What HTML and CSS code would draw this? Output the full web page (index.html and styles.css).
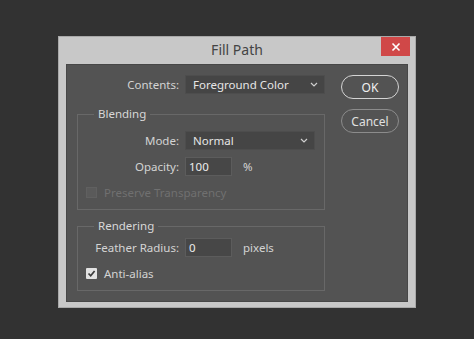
FILE: index.html
```html
<!DOCTYPE html>
<html>
  <head>
    <title>Fill Path</title>
    <link rel="stylesheet" href="styles.css">
  </head>
  <body>
    <div class="window">
      <div class="titlebar">
        <span></span>
        <span class="title">Fill Path</span>
        <button class="close">
          <svg width="10" height="10" viewBox="0 0 10 10"><path d="M1.5 1.5 L8.5 8.5 M8.5 1.5 L1.5 8.5" stroke="#fff" stroke-width="1.6"/></svg>
        </button>
      </div>
      <div class="panel">
        <div class="form">
          <div class="row top-row">
            <label class="label wide">Contents:</label>
            <div class="select contents">
              <span>Foreground Color</span>
              <svg width="8" height="5" viewBox="0 0 8 5"><path d="M1 1 L4 4 L7 1" fill="none" stroke="#cfcfcf" stroke-width="1.2"/></svg>
            </div>
          </div>

          <fieldset class="group blending">
            <legend>Blending</legend>
            <div class="row">
              <label class="label">Mode:</label>
              <div class="select mode">
                <span>Normal</span>
                <svg width="8" height="5" viewBox="0 0 8 5"><path d="M1 1 L4 4 L7 1" fill="none" stroke="#cfcfcf" stroke-width="1.2"/></svg>
              </div>
            </div>
            <div class="row gap">
              <label class="label">Opacity:</label>
              <div class="input">100</div>
              <span class="unit">%</span>
            </div>
            <div class="check-row disabled">
              <span class="box"></span>
              <span>Preserve Transparency</span>
            </div>
          </fieldset>

          <fieldset class="group rendering">
            <legend>Rendering</legend>
            <div class="row">
              <label class="label">Feather Radius:</label>
              <div class="input">0</div>
              <span class="unit">pixels</span>
            </div>
            <div class="check-row">
              <span class="box checked">
                <svg width="9" height="9" viewBox="0 0 9 9"><path d="M1.5 4.5 L3.7 6.8 L7.6 2" fill="none" stroke="#3a3a3a" stroke-width="1.7"/></svg>
              </span>
              <span>Anti-alias</span>
            </div>
          </fieldset>
        </div>

        <div class="buttons">
          <button class="btn ok">OK</button>
          <button class="btn cancel">Cancel</button>
        </div>
      </div>
    </div>
  </body>
</html>
```

FILE: styles.css
```css
body {
  margin: 0;
  padding: 36px 0 0 58px;
  background: #323232;
  font-family: "Noto Sans", "Open Sans", sans-serif;
  font-size: 11.5px;
  width: 474px;
  height: 339px;
  box-sizing: border-box;
}

.window {
  width: 358px;
  height: 272px;
  box-sizing: border-box;
  background: #c8c8c8;
  border: 1px solid #a9a9a9;
  display: flex;
  flex-direction: column;
}

.titlebar {
  height: 27px;
  display: grid;
  grid-template-columns: 1fr auto 1fr;
  align-items: start;
}
.title {
  color: #444;
  font-size: 14px;
  line-height: 26px;
}
.close {
  justify-self: end;
  width: 29px;
  height: 19px;
  margin-right: 5px;
  border: none;
  padding: 0;
  background: #d04848;
  display: flex;
  align-items: center;
  justify-content: center;
}

.panel {
  margin: 0 7px 0 7px;
  height: 238px;
  box-sizing: border-box;
  background: #535353;
  border: 1px solid #474747;
  display: flex;
  padding: 10px 0 0 10px;
}

.form {
  width: 248px;
  color: #d4d4d4;
}

.row {
  display: flex;
  align-items: center;
  height: 19px;
}
.row.gap {
  margin-top: 7px;
}
.top-row {
  margin-bottom: 12px;
}

.label {
  width: 101px;
  text-align: right;
  margin-right: 6px;
}
.label.wide {
  width: 102px;
}

.select {
  height: 19px;
  box-sizing: border-box;
  background: #454545;
  border: 1px solid #4d4d4d;
  color: #e6e6e6;
  display: flex;
  align-items: center;
  justify-content: space-between;
  padding: 0 6px 0 7px;
}
.select.contents {
  width: 140px;
}
.select.mode {
  width: 130px;
}

.input {
  width: 47px;
  height: 19px;
  box-sizing: border-box;
  background: #474747;
  border: 1px solid #5c5c5c;
  color: #ececec;
  padding-left: 3px;
  line-height: 17px;
}
.unit {
  margin-left: 11px;
}

.group {
  margin: 0;
  padding: 0 0 9px 0;
  border: 1px solid #686868;
}
.group legend {
  margin-left: 16px;
  padding: 0 4px;
  line-height: 16px;
  color: #d8d8d8;
}
.blending {
  padding-top: 9px;
}
.rendering {
  margin-top: 8px;
  padding-top: 4px;
}

.check-row {
  display: flex;
  align-items: center;
  height: 16px;
  margin-top: 8px;
  padding-left: 8px;
}
.check-row .box {
  width: 11px;
  height: 11px;
  box-sizing: border-box;
  margin-right: 7px;
  display: flex;
  align-items: center;
  justify-content: center;
}
.disabled {
  color: #707070;
}
.disabled .box {
  background: #5a5a5a;
  border: 1px solid #606060;
}
.box.checked {
  background: #e2e2e2;
  border-radius: 1px;
}

.buttons {
  margin-left: 16px;
  display: flex;
  flex-direction: column;
  gap: 10px;
}
.btn {
  width: 58px;
  height: 24px;
  border-radius: 12px;
  background: transparent;
  font-family: inherit;
  font-size: 12px;
  padding: 0;
}
.ok {
  border: 1.5px solid #d4d4d4;
  color: #f0f0f0;
}
.cancel {
  border: 1.5px solid #8c8c8c;
  color: #e0e0e0;
}
```
